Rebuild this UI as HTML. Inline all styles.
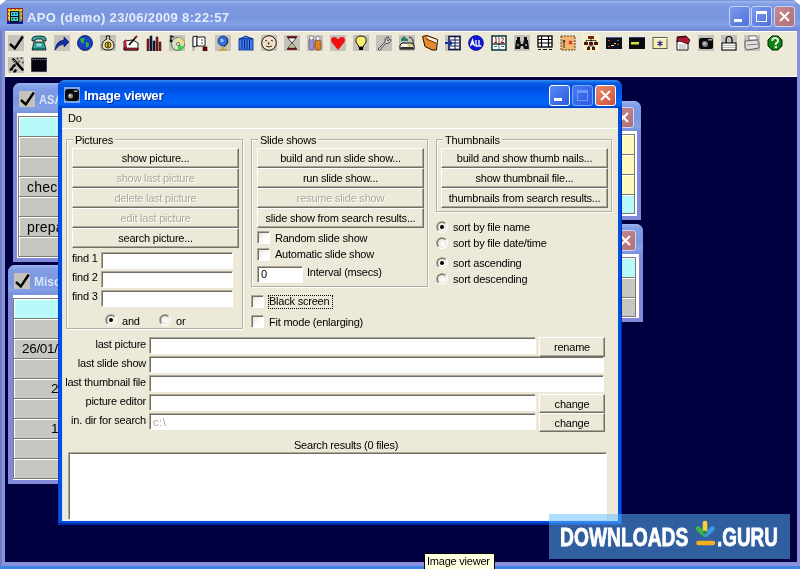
<!DOCTYPE html><html><head><meta charset="utf-8"><style>
*{box-sizing:border-box;margin:0;padding:0}
html,body{width:800px;height:569px;overflow:hidden;background:#000040;font-family:"Liberation Sans", sans-serif;}
body{will-change:transform}
.abs{position:absolute}
.t{position:absolute;white-space:nowrap;font-size:11px;line-height:13px;color:#000;letter-spacing:-0.22px}
.btn{position:absolute;background:#ECE9D8;border-top:1px solid #fff;border-left:1px solid #fff;border-right:1px solid #716F64;border-bottom:1px solid #716F64;box-shadow:inset -1px -1px 0 #ACA899;font-size:11px;letter-spacing:-0.22px;text-align:center;white-space:nowrap;color:#000}
.btn.dis{color:#ACA899;text-shadow:1px 1px 0 #fff}
.edit{position:absolute;background:#fff;border-top:1px solid #ACA899;border-left:1px solid #ACA899;border-right:1px solid #fff;border-bottom:1px solid #fff;box-shadow:inset 1px 1px 0 #716F64}
.grp{position:absolute;border:1px solid #B4B0A2;box-shadow:inset 1px 1px 0 #fff, 1px 1px 0 #fff}
.cb{position:absolute;width:13px;height:13px;border-top:1px solid #ACA899;border-left:1px solid #ACA899;border-right:1px solid #fff;border-bottom:1px solid #fff;background:linear-gradient(135deg,#E6E4DA,#fff 70%);box-shadow:inset 1px 1px 0 #716F64}
.rb{position:absolute;width:12px;height:12px;border-radius:50%;background:linear-gradient(135deg,#ACA899 0,#ACA899 50%,#fff 50%);}
.rb::after{content:"";position:absolute;left:1px;top:1px;width:10px;height:10px;border-radius:50%;background:linear-gradient(135deg,#716F64 0,#716F64 45%,#ECE9D8 55%);}
.rbi{position:absolute;left:2px;top:2px;width:8px;height:8px;border-radius:50%;background:radial-gradient(circle at 60% 60%,#fff,#E0DED4);z-index:2}
.dot{position:absolute;left:2px;top:2px;width:4px;height:4px;border-radius:50%;background:#000}
</style></head><body>

<div class="abs" style="left:0;top:0;width:800px;height:569px;background:#8890DC"></div>
<div class="abs" style="left:0;top:0;width:2px;height:569px;background:#6E7EC0"></div>
<div class="abs" style="left:0;top:566px;width:800px;height:3px;background:#3A84E4"></div>
<div class="abs" style="left:0;top:0;width:800px;height:31px;border-radius:7px 7px 0 0;background:linear-gradient(#7484CC 0,#98B4EC 1.5px,#8AA6E8 3px,#7C98E0 6px,#7A96DE 18px,#82A0E6 24px,#7890DA 28px,#7088D4 31px)"></div>
<div class="abs" style="left:0;top:0;width:6px;height:5px;background:#fff;clip-path:polygon(0 0,100% 0,0 100%)"></div>
<div class="abs" style="left:794px;top:0;width:6px;height:5px;background:#fff;clip-path:polygon(0 0,100% 0,100% 100%)"></div>
<svg class="abs" style="left:7px;top:8px" width="16" height="16" viewBox="0 0 16 16">
<rect width="16" height="16" fill="#902818"/><rect x="1" y="1" width="14" height="13" fill="#F8D040"/>
<path d="M1 3L2 4L1 5M1 7L2 8L1 9M1 11L2 12L1 13M3 1L4 2L5 1M7 1L8 2L9 1M11 1L12 2L13 1M15 3L14 4L15 5M15 7L14 8L15 9M15 11L14 12L15 13" stroke="#C04010" stroke-width="0.8" fill="none"/>
<rect x="0" y="13" width="16" height="3" fill="#1020A0"/>
<rect x="3" y="3" width="9" height="12" fill="#101020"/><rect x="4" y="4" width="7" height="4" fill="#40D0D8"/><rect x="4" y="9" width="7" height="4" fill="#40D0D8"/>
<rect x="5" y="5" width="1.5" height="1.5" fill="#103040"/><rect x="8" y="5" width="1.5" height="1.5" fill="#103040"/><rect x="5" y="10" width="1.5" height="1.5" fill="#103040"/><rect x="8" y="10" width="1.5" height="1.5" fill="#103040"/>
<rect x="12" y="3" width="1.5" height="11" fill="#208878"/></svg>
<div class="t" style="left:27px;top:9px;font-size:13px;line-height:17px;font-weight:bold;color:#E4ECFA;letter-spacing:0.35px">APO (demo) 23/06/2009 8:22:57</div>
<div class="abs" style="left:729px;top:6px;width:21px;height:21px;border-radius:3px;border:1px solid #C8D4F8;background:linear-gradient(135deg,#7A9AF0,#5070D8)"><div class="abs" style="left:4px;top:12px;width:8px;height:3px;background:#fff"></div></div>
<div class="abs" style="left:751px;top:6px;width:21px;height:21px;border-radius:3px;border:1px solid #C8D4F8;background:linear-gradient(135deg,#7A9AF0,#5070D8)"><div class="abs" style="left:4px;top:4px;width:11px;height:11px;border:1px solid #fff;border-top-width:3px"></div></div>
<div class="abs" style="left:774px;top:6px;width:21px;height:21px;border-radius:3px;border:1px solid #C8D4F8;background:linear-gradient(135deg,#C88890,#B07078)"><svg class="abs" style="left:3px;top:3px" width="13" height="13" viewBox="0 0 13 13"><path d="M2 2L11 11M11 2L2 11" stroke="#fff" stroke-width="2"/></svg></div>
<div class="abs" style="left:5px;top:31px;width:792px;height:46px;background:#ECE9D8;border-top:1px solid #FFFFFF;border-bottom:1px solid #FFFFFF"></div>
<div class="abs" style="left:5px;top:77px;width:792px;height:485px;background:#000040"></div>
<svg class="abs" style="left:8px;top:35px" width="16" height="16" viewBox="0 0 16 16"><rect width="16" height="16" fill="#C4C2BA"/><path d="M2 9L6.8 13.5L14.8 1.5" stroke="#000" stroke-width="2.4" fill="none"/></svg>
<svg class="abs" style="left:31px;top:35px" width="16" height="16" viewBox="0 0 16 16"><path d="M1 4Q1 1 8 1Q15 1 15 4L15 6L12 6L11 4L5 4L4 6L1 6Z" fill="#30B0A8" stroke="#000" stroke-width="0.8"/><path d="M3 7L13 7L15 15L1 15Z" fill="#30B0A8" stroke="#000" stroke-width="0.8"/><rect x="5" y="8" width="6" height="4" fill="#90E0D8" stroke="#206060" stroke-width="0.6"/><rect x="2" y="13" width="12" height="2" fill="#107070"/></svg>
<svg class="abs" style="left:54px;top:35px" width="16" height="16" viewBox="0 0 16 16"><rect width="16" height="16" fill="#C4C2BA"/><path d="M1 15Q2 6 10 5L10 2L15 7L10 12L10 9Q5 9 1 15Z" fill="#1030A0" stroke="#000060" stroke-width="0.6"/></svg>
<svg class="abs" style="left:77px;top:35px" width="16" height="16" viewBox="0 0 16 16"><circle cx="8" cy="8" r="7.5" fill="#1840C0" stroke="#001060" stroke-width="0.8"/><path d="M3 4Q6 2 8 4Q6 6 7 8Q5 9 4 7Z M9 7Q12 7 12 10Q11 13 9 12Z" fill="#30B040"/></svg>
<svg class="abs" style="left:100px;top:35px" width="16" height="16" viewBox="0 0 16 16"><rect width="16" height="16" fill="#C4C2BA"/><path d="M6 1L10 1L9 4Q14 6 14 11Q14 15 8 15Q2 15 2 11Q2 6 7 4Z" fill="#E8E0B0" stroke="#000" stroke-width="0.9"/><circle cx="8" cy="10" r="3" fill="#E0C020" stroke="#000" stroke-width="0.7"/><path d="M9 8.5Q7 8 7 9.5Q9 10 9 11Q8 12 7 11.5" stroke="#000" stroke-width="0.7" fill="none"/></svg>
<svg class="abs" style="left:123px;top:35px" width="16" height="16" viewBox="0 0 16 16"><path d="M1 6L10 5L15 8L15 15L1 15Z" fill="#fff" stroke="#000" stroke-width="0.9"/><path d="M1 6L3 4L4 13L1 14Z" fill="#C02040"/><path d="M1 13L15 13L15 15L1 15Z" fill="#C02040" stroke="#000" stroke-width="0.6"/><path d="M6 10L14 1" stroke="#000" stroke-width="1.6"/><path d="M11 3L14 1" stroke="#C02040" stroke-width="1.5"/></svg>
<svg class="abs" style="left:146px;top:35px" width="16" height="16" viewBox="0 0 16 16"><rect x="1" y="4" width="2" height="12" fill="#A02020" stroke="#000" stroke-width="0.5"/><rect x="4" y="1" width="2" height="15" fill="#102050" stroke="#000" stroke-width="0.5"/><rect x="7" y="6" width="2" height="10" fill="#102050" stroke="#000" stroke-width="0.5"/><rect x="10" y="2" width="2" height="14" fill="#A02020" stroke="#000" stroke-width="0.5"/><rect x="13" y="7" width="2" height="9" fill="#A02020" stroke="#000" stroke-width="0.5"/></svg>
<svg class="abs" style="left:169px;top:35px" width="16" height="16" viewBox="0 0 16 16"><rect width="16" height="16" fill="#C4C2BA"/><circle cx="9" cy="9" r="6.5" fill="#D8E0C8" stroke="#404040" stroke-width="0.7"/><path d="M9 9L9 2.5A6.5 6.5 0 0 1 15.5 9Z" fill="#E8E080"/><path d="M9 9L15 12A6.5 6.5 0 0 1 9 15.5Z" fill="#40D040"/><circle cx="9" cy="9" r="1.5" fill="#fff" stroke="#000" stroke-width="0.5"/><path d="M2 6L2 1L5 2" stroke="#000" stroke-width="1.2" fill="none"/><circle cx="2" cy="6" r="1.3" fill="#000"/></svg>
<svg class="abs" style="left:192px;top:35px" width="16" height="16" viewBox="0 0 16 16"><rect x="0" y="0" width="3" height="16" fill="#C4C2BA"/><path d="M1 2L5 1L5 11L1 12Z" fill="#fff" stroke="#000" stroke-width="0.9"/><path d="M5 2L13 2L13 11L5 11Z" fill="#fff" stroke="#000" stroke-width="0.9"/><rect x="9" y="4" width="2" height="2" fill="#A0A0A0"/><rect x="9" y="7" width="2" height="2" fill="#A0A0A0"/><rect x="11" y="12" width="4" height="4" fill="#800000" stroke="#000" stroke-width="0.6"/></svg>
<svg class="abs" style="left:215px;top:35px" width="16" height="16" viewBox="0 0 16 16"><rect width="16" height="16" fill="#C4C2BA"/><circle cx="8" cy="6" r="5" fill="#3070E0" stroke="#102060" stroke-width="0.7"/><path d="M5 4Q8 3 9 6Q7 8 6 7Z" fill="#A0C0F0"/><path d="M12 3Q14 8 9 12" stroke="#403010" stroke-width="1" fill="none"/><path d="M8 12L8 14M4 15L12 15" stroke="#C0A020" stroke-width="1.6"/></svg>
<svg class="abs" style="left:238px;top:35px" width="16" height="16" viewBox="0 0 16 16"><path d="M1 4L8 1L15 4Z" fill="#4080F0" stroke="#002080" stroke-width="0.8"/><rect x="1" y="4" width="14" height="11" fill="#4080F0" stroke="#002080" stroke-width="0.8"/><path d="M4 5L4 14M6.5 5L6.5 14M9 5L9 14M11.5 5L11.5 14" stroke="#002080" stroke-width="1"/></svg>
<svg class="abs" style="left:261px;top:35px" width="16" height="16" viewBox="0 0 16 16"><rect width="16" height="16" fill="#C4C2BA"/><circle cx="8" cy="8" r="7.3" fill="#F4E0C8" stroke="#000" stroke-width="0.9"/><path d="M4 6L6 5.5M10 5.5L12 6M8 7L7 9L8.5 9M5 11Q8 13 11 11" stroke="#000" stroke-width="0.8" fill="none"/></svg>
<svg class="abs" style="left:284px;top:35px" width="16" height="16" viewBox="0 0 16 16"><rect width="16" height="16" fill="#C4C2BA"/><rect x="3" y="1" width="10" height="2" fill="#802020"/><rect x="3" y="13" width="10" height="2" fill="#802020"/><path d="M4 3L12 3L8 8L12 13L4 13L8 8Z" fill="#fff" stroke="#000" stroke-width="0.7"/><path d="M5 12L11 12L8 9Z" fill="#C0C080"/></svg>
<svg class="abs" style="left:307px;top:35px" width="16" height="16" viewBox="0 0 16 16"><rect width="16" height="16" fill="#C4C2BA"/><rect x="2" y="4" width="5" height="11" rx="2" fill="#A090D0" stroke="#404060" stroke-width="0.6"/><circle cx="4.5" cy="3" r="2" fill="#fff" stroke="#404060" stroke-width="0.5"/><rect x="8" y="5" width="6" height="10" rx="2" fill="#E08020" stroke="#603000" stroke-width="0.6"/><circle cx="11" cy="3.5" r="2" fill="#fff" stroke="#404060" stroke-width="0.5"/></svg>
<svg class="abs" style="left:330px;top:35px" width="16" height="16" viewBox="0 0 16 16"><rect width="16" height="16" fill="#C4C2BA"/><path d="M8 15L1.5 7Q0 3 3.5 2Q6.5 1.5 8 4.5Q9.5 1.5 12.5 2Q16 3 14.5 7Z" fill="#F01010"/></svg>
<svg class="abs" style="left:353px;top:35px" width="16" height="16" viewBox="0 0 16 16"><rect width="16" height="16" fill="#C4C2BA"/><path d="M8 1Q14 1 13 7Q12 9 10.5 10.5L10.5 12L5.5 12L5.5 10.5Q4 9 3 7Q2 1 8 1Z" fill="#F8F070" stroke="#000" stroke-width="0.9"/><rect x="6" y="12" width="4" height="3" fill="#000"/></svg>
<svg class="abs" style="left:376px;top:35px" width="16" height="16" viewBox="0 0 16 16"><rect width="16" height="16" fill="#C4C2BA"/><path d="M2 14L9 7Q8 3 11 2L13 2L11 4.5L12 6L14 4L15 5Q14 9 9.5 8.5L3.5 15.5Z" fill="#D0D0D0" stroke="#404040" stroke-width="0.9"/></svg>
<svg class="abs" style="left:399px;top:35px" width="16" height="16" viewBox="0 0 16 16"><rect width="16" height="16" fill="#C4C2BA"/><path d="M1 10L3 8L12 8L15 10L15 14L1 14Z" fill="#F0EEE0" stroke="#000" stroke-width="1"/><rect x="2" y="12" width="12" height="2" fill="#303030"/><rect x="3" y="9.5" width="4" height="2" fill="#fff"/><rect x="9" y="9.5" width="4" height="2" fill="#E0C050"/><path d="M5 1L8 4L2 4Z" fill="#208060"/><rect x="2" y="4" width="7" height="2" fill="#208060"/><path d="M10 2Q15 3 14 9" stroke="#000" stroke-width="0.9" fill="none"/></svg>
<svg class="abs" style="left:422px;top:35px" width="16" height="16" viewBox="0 0 16 16"><path d="M0.5 1.5L5 0.5L15.5 4.5L14.5 15L10 15L3 11.5Z" fill="#E88830" stroke="#201000" stroke-width="1"/><path d="M5 1.5L15 5L14.5 8L6 4Z" fill="#F8F0E0"/><path d="M4 4L14 8" stroke="#402000" stroke-width="0.8"/></svg>
<svg class="abs" style="left:445px;top:35px" width="16" height="16" viewBox="0 0 16 16"><rect width="16" height="16" fill="#C4C2BA"/><rect x="4" y="1.5" width="11" height="13" fill="#fff" stroke="#101840" stroke-width="1.6"/><path d="M5 5L14 5M5 8L14 8M5 11L14 11M10 2L10 14" stroke="#101840" stroke-width="1"/><path d="M0 7L5 7L5 5L8 8L5 11L5 9L0 9Z" fill="#1030B0"/></svg>
<svg class="abs" style="left:468px;top:35px" width="16" height="16" viewBox="0 0 16 16"><circle cx="8" cy="8" r="7.5" fill="#1018D8" stroke="#000070" stroke-width="0.6"/><path d="M2.5 11L4.5 5L6.5 11M3.3 9L5.7 9M8 5L8 11L10 11M11 5L11 11L13.3 11" stroke="#fff" stroke-width="1.3" fill="none"/></svg>
<svg class="abs" style="left:491px;top:35px" width="16" height="16" viewBox="0 0 16 16"><rect x="1" y="1" width="14" height="14" fill="#fff" stroke="#104040" stroke-width="1.6"/><path d="M8 2L8 14" stroke="#104040" stroke-width="0.8"/><path d="M4 3L5 2.5L5 7.5M3.5 7.5L6 7.5M10 3.5Q12 2 12.5 4Q12 5.5 10 7.5L13 7.5" stroke="#B01010" stroke-width="1" fill="none"/><path d="M2 9L14 9" stroke="#000" stroke-width="1.2"/><path d="M3 11.5L6 11.5M10 11.5L13 11.5" stroke="#208080" stroke-width="1"/></svg>
<svg class="abs" style="left:514px;top:35px" width="16" height="16" viewBox="0 0 16 16"><rect width="16" height="16" fill="#C4C2BA"/><path d="M2 5L6 5L7 9L9 9L10 5L14 5L15 14L10 14L9 11L7 11L6 14L1 14Z" fill="#101010"/><rect x="3" y="2" width="3" height="3" fill="#101010"/><rect x="10" y="2" width="3" height="3" fill="#101010"/><rect x="3" y="9" width="2" height="2" fill="#808080"/><rect x="11" y="9" width="2" height="2" fill="#808080"/></svg>
<svg class="abs" style="left:537px;top:35px" width="16" height="16" viewBox="0 0 16 16"><rect x="1" y="1" width="14" height="11" fill="#fff" stroke="#000" stroke-width="1.3"/><path d="M1 4.5L15 4.5M1 8L15 8M4.5 1L4.5 12M11.5 1L11.5 12" stroke="#000" stroke-width="1.2"/><path d="M1 14.5L4 14.5M6 14.5L10 14.5M12 14.5L15 14.5" stroke="#000" stroke-width="1.2"/></svg>
<svg class="abs" style="left:560px;top:35px" width="16" height="16" viewBox="0 0 16 16"><rect x="1" y="1" width="14" height="14" fill="#F0B870" stroke="#604020" stroke-width="1" stroke-dasharray="2 1"/><path d="M4 13L4 5M3 7L4 5L5 7" stroke="#402010" stroke-width="1" fill="none"/><path d="M9 6L12 9M12 6L9 9" stroke="#E02020" stroke-width="1.3"/></svg>
<svg class="abs" style="left:583px;top:35px" width="16" height="16" viewBox="0 0 16 16"><rect width="16" height="16" fill="#F8F4C8"/><rect x="5" y="1" width="6" height="3" fill="#802020"/><rect x="1" y="7" width="4" height="3" fill="#501010"/><rect x="6" y="7" width="4" height="3" fill="#501010"/><rect x="11" y="7" width="4" height="3" fill="#501010"/><rect x="4" y="12" width="3" height="3" fill="#501010"/><rect x="9" y="12" width="3" height="3" fill="#501010"/><path d="M8 4L8 7M3 7L3 5.5L13 5.5L13 7M8 10L8 11L5.5 11L5.5 12M8 11L10.5 11L10.5 12" stroke="#000" stroke-width="0.7" fill="none"/></svg>
<svg class="abs" style="left:606px;top:35px" width="16" height="16" viewBox="0 0 16 16"><rect x="0" y="2" width="16" height="12" fill="#101018"/><rect x="0" y="2" width="16" height="1" fill="#5060A0"/><rect x="2" y="5" width="2" height="1" fill="#C04040"/><rect x="8" y="8" width="2" height="1" fill="#E0E060"/><rect x="5" y="10" width="3" height="1" fill="#E0E0E0"/><rect x="11" y="5" width="2" height="1" fill="#4080C0"/><rect x="2" y="11" width="2" height="1" fill="#C04040"/><rect x="11" y="9" width="2" height="1" fill="#A04040"/></svg>
<svg class="abs" style="left:629px;top:35px" width="16" height="16" viewBox="0 0 16 16"><rect x="0" y="2" width="16" height="12" fill="#0A0A0A"/><rect x="0" y="2" width="16" height="1" fill="#304080"/><rect x="2" y="7" width="8" height="2.5" fill="#D8E040"/></svg>
<svg class="abs" style="left:652px;top:35px" width="16" height="16" viewBox="0 0 16 16"><rect x="1" y="2.5" width="14" height="11" fill="#F8F0B0" stroke="#606040" stroke-width="1"/><rect x="2" y="3" width="13" height="1" fill="#fff"/><path d="M8 5.5L8 11.5M5.5 7L10.5 10M10.5 7L5.5 10" stroke="#1818A0" stroke-width="1.1"/></svg>
<svg class="abs" style="left:675px;top:35px" width="16" height="16" viewBox="0 0 16 16"><path d="M2 5L10 4L13 7L13 15L2 15Z" fill="#fff" stroke="#000" stroke-width="0.9"/><path d="M2 2L11 1L15 5L13 9L5 6L2 7Z" fill="#B01830" stroke="#200" stroke-width="0.8"/><path d="M3 1.5L3 3M5 1.3L5 3M7 1.1L7 3M9 1L9 3" stroke="#000" stroke-width="0.7"/><path d="M4 10L11 10M4 12L11 12M4 14L11 14" stroke="#909090" stroke-width="0.8"/></svg>
<svg class="abs" style="left:698px;top:35px" width="16" height="16" viewBox="0 0 16 16"><rect width="16" height="16" fill="#C4C2BA"/><rect x="1" y="3" width="14" height="11" rx="2.5" fill="#0A0A0A"/><circle cx="7" cy="9" r="3" fill="#808080"/><circle cx="6.5" cy="8.5" r="1.3" fill="#D0D0D0"/><rect x="10" y="4" width="4" height="1.5" fill="#A0A0A0"/></svg>
<svg class="abs" style="left:721px;top:35px" width="16" height="16" viewBox="0 0 16 16"><rect width="16" height="16" fill="#C4C2BA"/><path d="M5 8L5 5Q5 1.5 8 1.5Q11 1.5 11 5L11 8" stroke="#000" stroke-width="1.2" fill="none"/><rect x="1" y="8" width="14" height="7" fill="#fff" stroke="#000" stroke-width="1"/><path d="M2.5 10.5L13.5 10.5M2.5 12.5L13.5 12.5" stroke="#404040" stroke-width="0.8" stroke-dasharray="1 1"/></svg>
<svg class="abs" style="left:744px;top:35px" width="16" height="16" viewBox="0 0 16 16"><rect width="16" height="16" fill="#C4C2BA"/><path d="M5 1L12 1L14 5L5 5Z" fill="#fff" stroke="#606060" stroke-width="0.8"/><path d="M1 6L13 5L15 8L15 13L3 15L1 12Z" fill="#E0E0E0" stroke="#505050" stroke-width="0.9"/><path d="M3 10L15 9" stroke="#808080" stroke-width="1"/></svg>
<svg class="abs" style="left:767px;top:35px" width="16" height="16" viewBox="0 0 16 16"><path d="M5 1L11 1L15 5L15 11L11 15L5 15L1 11L1 5Z" fill="#108010" stroke="#002800" stroke-width="1"/><path d="M5.2 6Q5.2 3 8 3Q11 3 11 5.8Q11 7.5 8.8 8.5L8.8 10" stroke="#E0F8E0" stroke-width="2" fill="none"/><rect x="7.6" y="11" width="2.4" height="2.2" fill="#E0F8E0"/></svg>
<svg class="abs" style="left:8px;top:57px" width="16" height="16" viewBox="0 0 16 16"><rect width="16" height="16" fill="#C4C2BA"/><path d="M5.5 2.5L14.5 12.5" stroke="#000" stroke-width="2.6" stroke-linecap="round"/><circle cx="6.3" cy="3.5" r="0.6" fill="#fff"/><circle cx="7.8" cy="5.1" r="0.6" fill="#fff"/><ellipse cx="6" cy="8.8" rx="2.2" ry="1.4" transform="rotate(-40 6 8.8)" fill="#000"/><ellipse cx="3.5" cy="12" rx="2.2" ry="1.4" transform="rotate(-40 3.5 12)" fill="#000"/><ellipse cx="7" cy="14" rx="2" ry="1.3" transform="rotate(-40 7 14)" fill="#000"/><circle cx="9.5" cy="1.5" r="0.9" fill="#404040"/><circle cx="13.5" cy="1" r="0.9" fill="#404040"/><circle cx="11" cy="4.5" r="0.9" fill="#404040"/><circle cx="15" cy="5.5" r="0.9" fill="#404040"/></svg>
<svg class="abs" style="left:31px;top:57px" width="16" height="16" viewBox="0 0 16 16"><rect x="0" y="0.5" width="16" height="14.5" fill="#05050F" stroke="#C0C0D8" stroke-width="0.6"/><path d="M1 2.5L15 2.5" stroke="#8080A0" stroke-width="1" stroke-dasharray="1.5 1"/></svg>
<div class="abs" style="left:13px;top:83px;width:120px;height:179px;background:#808AD8;border-radius:7px 7px 0 0;overflow:hidden"><div class="abs" style="left:0;top:0;width:120px;height:30px;background:linear-gradient(#A0B8F0 0,#8CA8EC 2px,#809CE4 5px,#7A96E0 18px,#84A0E6 25px,#7A94DC 29px)"></div></div>
<div class="abs" style="left:17px;top:113px;width:60px;height:145px;background:#fff"></div>
<div class="abs" style="left:18px;top:116px;width:60px;height:20px;background:#B8FAFA;border-top:1px solid #7C7C74;border-left:1px solid #7C7C74;box-shadow:inset 1px 1px 0 #fff"></div>
<div class="abs" style="left:18px;top:136px;width:60px;height:20px;background:#C8C6C0;border-top:1px solid #7C7C74;border-left:1px solid #7C7C74;box-shadow:inset 1px 1px 0 #fff"></div>
<div class="abs" style="left:18px;top:156px;width:60px;height:20px;background:#C8C6C0;border-top:1px solid #7C7C74;border-left:1px solid #7C7C74;box-shadow:inset 1px 1px 0 #fff"></div>
<div class="abs" style="left:18px;top:176px;width:60px;height:20px;background:#C8C6C0;border-top:1px solid #7C7C74;border-left:1px solid #7C7C74;box-shadow:inset 1px 1px 0 #fff"></div>
<div class="t" style="left:27px;top:179px;font-size:14px;line-height:16px;letter-spacing:0.2px">check</div>
<div class="abs" style="left:18px;top:196px;width:60px;height:20px;background:#C8C6C0;border-top:1px solid #7C7C74;border-left:1px solid #7C7C74;box-shadow:inset 1px 1px 0 #fff"></div>
<div class="abs" style="left:18px;top:216px;width:60px;height:20px;background:#C8C6C0;border-top:1px solid #7C7C74;border-left:1px solid #7C7C74;box-shadow:inset 1px 1px 0 #fff"></div>
<div class="t" style="left:27px;top:219px;font-size:14px;line-height:16px;letter-spacing:0.2px">prepare</div>
<div class="abs" style="left:18px;top:236px;width:60px;height:20px;background:#C8C6C0;border-top:1px solid #7C7C74;border-left:1px solid #7C7C74;box-shadow:inset 1px 1px 0 #fff"></div>
<div class="abs" style="left:18px;top:256px;width:60px;height:1px;background:#7C7C74"></div>
<svg class="abs" style="left:19px;top:91px" width="16" height="16" viewBox="0 0 16 16"><rect width="16" height="16" fill="#C4C2BA"/><path d="M2 9L6.8 13.5L14.8 1.5" stroke="#000" stroke-width="2.4" fill="none"/></svg>
<div class="t" style="left:39px;top:92px;font-size:13px;line-height:16px;font-weight:bold;color:#D8E4F8;letter-spacing:0;transform:scaleX(0.86);transform-origin:0 0">ASAP</div>
<div class="abs" style="left:8px;top:265px;width:120px;height:219px;background:#808AD8;border-radius:7px 7px 0 0;overflow:hidden"><div class="abs" style="left:0;top:0;width:120px;height:30px;background:linear-gradient(#A0B8F0 0,#8CA8EC 2px,#809CE4 5px,#7A96E0 18px,#84A0E6 25px,#7A94DC 29px)"></div></div>
<div class="abs" style="left:13px;top:295px;width:60px;height:185px;background:#fff"></div>
<div class="abs" style="left:13px;top:298px;width:60px;height:20px;background:#B8FAFA;border-top:1px solid #7C7C74;border-left:1px solid #7C7C74;box-shadow:inset 1px 1px 0 #fff"></div>
<div class="abs" style="left:13px;top:318px;width:60px;height:20px;background:#C8C6C0;border-top:1px solid #7C7C74;border-left:1px solid #7C7C74;box-shadow:inset 1px 1px 0 #fff"></div>
<div class="abs" style="left:13px;top:338px;width:60px;height:20px;background:#C8C6C0;border-top:1px solid #7C7C74;border-left:1px solid #7C7C74;box-shadow:inset 1px 1px 0 #fff"></div>
<div class="t" style="left:22px;top:341px;font-size:13.5px;line-height:16px;letter-spacing:-0.3px">26/01/2009</div>
<div class="abs" style="left:13px;top:358px;width:60px;height:20px;background:#C8C6C0;border-top:1px solid #7C7C74;border-left:1px solid #7C7C74;box-shadow:inset 1px 1px 0 #fff"></div>
<div class="abs" style="left:13px;top:378px;width:60px;height:20px;background:#C8C6C0;border-top:1px solid #7C7C74;border-left:1px solid #7C7C74;box-shadow:inset 1px 1px 0 #fff"></div>
<div class="t" style="left:13px;top:381px;width:45.5px;text-align:right;font-size:13.5px;line-height:16px;letter-spacing:0">2</div>
<div class="abs" style="left:13px;top:398px;width:60px;height:20px;background:#C8C6C0;border-top:1px solid #7C7C74;border-left:1px solid #7C7C74;box-shadow:inset 1px 1px 0 #fff"></div>
<div class="abs" style="left:13px;top:418px;width:60px;height:20px;background:#C8C6C0;border-top:1px solid #7C7C74;border-left:1px solid #7C7C74;box-shadow:inset 1px 1px 0 #fff"></div>
<div class="t" style="left:13px;top:421px;width:45.5px;text-align:right;font-size:13.5px;line-height:16px;letter-spacing:0">1</div>
<div class="abs" style="left:13px;top:438px;width:60px;height:20px;background:#C8C6C0;border-top:1px solid #7C7C74;border-left:1px solid #7C7C74;box-shadow:inset 1px 1px 0 #fff"></div>
<div class="abs" style="left:13px;top:458px;width:60px;height:20px;background:#C8C6C0;border-top:1px solid #7C7C74;border-left:1px solid #7C7C74;box-shadow:inset 1px 1px 0 #fff"></div>
<div class="abs" style="left:13px;top:478px;width:60px;height:1px;background:#7C7C74"></div>
<svg class="abs" style="left:14px;top:273px" width="16" height="16" viewBox="0 0 16 16"><rect width="16" height="16" fill="#C4C2BA"/><path d="M2 9L6.8 13.5L14.8 1.5" stroke="#000" stroke-width="2.4" fill="none"/></svg>
<div class="t" style="left:34px;top:274px;font-size:13px;line-height:16px;font-weight:bold;color:#D8E4F8;letter-spacing:0;transform:scaleX(0.92);transform-origin:0 0">Misc</div>
<div class="abs" style="left:560px;top:101px;width:81px;height:119px;background:#808AD8;border-radius:7px 7px 0 0;overflow:hidden"><div class="abs" style="left:0;top:0;width:81px;height:30px;background:linear-gradient(#A0B8F0 0,#8CA8EC 2px,#809CE4 5px,#7A96E0 18px,#84A0E6 25px,#7A94DC 29px)"></div></div>
<div class="abs" style="left:600px;top:131px;width:37px;height:85px;background:#fff"></div>
<div class="abs" style="left:600px;top:134px;width:35px;height:20px;background:#FCF8C0;border-top:1px solid #7C7C74;border-left:1px solid #7C7C74;box-shadow:inset 1px 1px 0 #fff"></div>
<div class="abs" style="left:600px;top:154px;width:35px;height:20px;background:#FCF8C0;border-top:1px solid #7C7C74;border-left:1px solid #7C7C74;box-shadow:inset 1px 1px 0 #fff"></div>
<div class="abs" style="left:600px;top:174px;width:35px;height:20px;background:#FCF8C0;border-top:1px solid #7C7C74;border-left:1px solid #7C7C74;box-shadow:inset 1px 1px 0 #fff"></div>
<div class="abs" style="left:600px;top:194px;width:35px;height:20px;background:#B8FAFA;border-top:1px solid #7C7C74;border-left:1px solid #7C7C74;box-shadow:inset 1px 1px 0 #fff"></div>
<div class="abs" style="left:600px;top:134px;width:35px;height:80px;border-right:1px solid #7C7C74;border-bottom:1px solid #7C7C74"></div>
<div class="abs" style="left:613px;top:107px;width:21px;height:21px;border-radius:3px;border:1px solid #C8D4F8;background:linear-gradient(135deg,#C88890,#B07078)"><svg class="abs" style="left:3px;top:3px" width="13" height="13" viewBox="0 0 13 13"><path d="M2 2L11 11M11 2L2 11" stroke="#fff" stroke-width="2"/></svg></div>
<div class="abs" style="left:560px;top:224px;width:83px;height:98px;background:#808AD8;border-radius:7px 7px 0 0;overflow:hidden"><div class="abs" style="left:0;top:0;width:83px;height:30px;background:linear-gradient(#A0B8F0 0,#8CA8EC 2px,#809CE4 5px,#7A96E0 18px,#84A0E6 25px,#7A94DC 29px)"></div></div>
<div class="abs" style="left:600px;top:254px;width:39px;height:64px;background:#fff"></div>
<div class="abs" style="left:600px;top:257px;width:36px;height:20px;background:#B8FAFA;border-top:1px solid #7C7C74;border-left:1px solid #7C7C74;box-shadow:inset 1px 1px 0 #fff"></div>
<div class="abs" style="left:600px;top:277px;width:36px;height:20px;background:#C8C6C0;border-top:1px solid #7C7C74;border-left:1px solid #7C7C74;box-shadow:inset 1px 1px 0 #fff"></div>
<div class="abs" style="left:600px;top:297px;width:36px;height:20px;background:#C8C6C0;border-top:1px solid #7C7C74;border-left:1px solid #7C7C74;box-shadow:inset 1px 1px 0 #fff"></div>
<div class="abs" style="left:600px;top:257px;width:36px;height:60px;border-right:1px solid #7C7C74;border-bottom:1px solid #7C7C74"></div>
<div class="abs" style="left:615px;top:230px;width:21px;height:21px;border-radius:3px;border:1px solid #C8D4F8;background:linear-gradient(135deg,#C88890,#B07078)"><svg class="abs" style="left:3px;top:3px" width="13" height="13" viewBox="0 0 13 13"><path d="M2 2L11 11M11 2L2 11" stroke="#fff" stroke-width="2"/></svg></div>
<div class="abs" style="left:58px;top:80px;width:564px;height:445px;border-radius:7px 7px 0 0;background:#0050E6;overflow:hidden;box-shadow:inset 1px 0 0 #0840C8, inset -1px 0 0 #0030A0, inset 0 -2px 0 #0028A0"><div class="abs" style="left:0;top:0;width:564px;height:29px;background:linear-gradient(#3A8CF8 0,#2A80F0 1px,#0A5CE2 3px,#0050E0 8px,#0058F0 14px,#0064F8 21px,#0060F0 25px,#0048D0 27px,#0038A8 29px)"></div><div class="abs" style="left:4px;top:28px;width:556px;height:413px;background:#ECE9D8;border-top:1px solid #D8E8F8;border-left:1px solid #D0E0F8;border-bottom:1px solid #F0F4F8"></div></div>
<svg class="abs" style="left:64px;top:87px" width="16" height="16" viewBox="0 0 16 16"><rect width="16" height="16" fill="#7AA6F0"/>
<rect x="1" y="2" width="14" height="12" rx="3" fill="#0A0A0A"/><circle cx="6.5" cy="9" r="2.5" fill="#909090"/><circle cx="6" cy="8.5" r="1" fill="#E0E0E0"/><rect x="10" y="3.5" width="3.5" height="1.5" fill="#B0B0B0"/></svg>
<div class="t" style="left:84px;top:88px;font-size:13.2px;line-height:16px;font-weight:bold;color:#fff;letter-spacing:-0.3px;text-shadow:1px 1px 0 #0030A0">Image viewer</div>
<div class="abs" style="left:549px;top:85px;width:21px;height:21px;border-radius:3px;border:1px solid #fff;background:linear-gradient(135deg,#5A8AF8,#2A5AE0)"><div class="abs" style="left:4px;top:12px;width:8px;height:3px;background:#fff"></div></div>
<div class="abs" style="left:572px;top:85px;width:21px;height:21px;border-radius:3px;border:1px solid #7AA8F8;background:linear-gradient(135deg,#4A7AF0,#2A5AE0)"><div class="abs" style="left:4px;top:4px;width:11px;height:11px;border:1px solid #6A9AF8;border-top-width:3px"></div></div>
<div class="abs" style="left:595px;top:85px;width:21px;height:21px;border-radius:3px;border:1px solid #fff;background:linear-gradient(135deg,#E88A6A,#D0503A)"><svg class="abs" style="left:3px;top:3px" width="13" height="13" viewBox="0 0 13 13"><path d="M2 2L11 11M11 2L2 11" stroke="#fff" stroke-width="2"/></svg></div>
<div class="t" style="left:68px;top:112px;">Do</div>
<div class="abs" style="left:62px;top:128px;width:556px;height:1px;background:#fff"></div>
<div class="grp" style="left:66px;top:139px;width:177px;height:190px"></div>
<div class="t" style="left:73px;top:134px;padding:0 2px;background:#ECE9D8">Pictures</div>
<div class="btn" style="left:72px;top:148px;width:167px;height:20px;line-height:18px">show picture...</div>
<div class="btn dis" style="left:72px;top:168px;width:167px;height:20px;line-height:18px">show last picture</div>
<div class="btn dis" style="left:72px;top:188px;width:167px;height:20px;line-height:18px">delete last picture</div>
<div class="btn dis" style="left:72px;top:208px;width:167px;height:20px;line-height:18px">edit last picture</div>
<div class="btn" style="left:72px;top:228px;width:167px;height:20px;line-height:18px">search picture...</div>
<div class="t" style="left:72px;top:252px;">find 1</div>
<div class="edit" style="left:101px;top:252px;width:132px;height:17px"></div>
<div class="t" style="left:72px;top:271px;">find 2</div>
<div class="edit" style="left:101px;top:271px;width:132px;height:17px"></div>
<div class="t" style="left:72px;top:290px;">find 3</div>
<div class="edit" style="left:101px;top:290px;width:132px;height:17px"></div>
<div class="rb" style="left:105px;top:314px"><div class="rbi"><div class=dot></div></div></div>
<div class="t" style="left:122px;top:315px;">and</div>
<div class="rb" style="left:159px;top:314px"><div class="rbi"></div></div>
<div class="t" style="left:176px;top:315px;">or</div>
<div class="grp" style="left:251px;top:139px;width:177px;height:148px"></div>
<div class="t" style="left:258px;top:134px;padding:0 2px;background:#ECE9D8">Slide shows</div>
<div class="btn" style="left:257px;top:148px;width:167px;height:20px;line-height:18px">build and run slide show...</div>
<div class="btn" style="left:257px;top:168px;width:167px;height:20px;line-height:18px">run slide show...</div>
<div class="btn dis" style="left:257px;top:188px;width:167px;height:20px;line-height:18px">resume slide show</div>
<div class="btn" style="left:257px;top:208px;width:167px;height:20px;line-height:18px">slide show from search results...</div>
<div class="cb" style="left:257px;top:231px"></div>
<div class="t" style="left:275px;top:232px;">Random slide show</div>
<div class="cb" style="left:257px;top:248px"></div>
<div class="t" style="left:275px;top:248px;">Automatic slide show</div>
<div class="edit" style="left:257px;top:266px;width:46px;height:17px"></div>
<div class="t" style="left:261px;top:268px;">0</div>
<div class="t" style="left:307px;top:266px;">Interval (msecs)</div>
<div class="cb" style="left:251px;top:295px"></div>
<div class="t" style="left:269px;top:295px;">Black screen</div>
<div class="abs" style="left:268px;top:295px;width:65px;height:14px;border:1px dotted #000"></div>
<div class="cb" style="left:251px;top:315px"></div>
<div class="t" style="left:269px;top:316px;">Fit mode (enlarging)</div>
<div class="grp" style="left:436px;top:139px;width:176px;height:73px"></div>
<div class="t" style="left:443px;top:134px;padding:0 2px;background:#ECE9D8">Thumbnails</div>
<div class="btn" style="left:441px;top:148px;width:167px;height:20px;line-height:18px">build and show thumb nails...</div>
<div class="btn" style="left:441px;top:168px;width:167px;height:20px;line-height:18px">show thumbnail file...</div>
<div class="btn" style="left:441px;top:188px;width:167px;height:20px;line-height:18px">thumbnails from search results...</div>
<div class="rb" style="left:436px;top:221px"><div class="rbi"><div class=dot></div></div></div>
<div class="t" style="left:453px;top:221px;">sort by file name</div>
<div class="rb" style="left:436px;top:237px"><div class="rbi"></div></div>
<div class="t" style="left:453px;top:237px;">sort by file date/time</div>
<div class="rb" style="left:436px;top:257px"><div class="rbi"><div class=dot></div></div></div>
<div class="t" style="left:453px;top:257px;">sort ascending</div>
<div class="rb" style="left:436px;top:273px"><div class="rbi"></div></div>
<div class="t" style="left:453px;top:273px;">sort descending</div>
<div class="t" style="left:40px;top:338px;width:106px;text-align:right">last picture</div>
<div class="t" style="left:40px;top:357px;width:106px;text-align:right">last slide show</div>
<div class="t" style="left:40px;top:376px;width:106px;text-align:right">last thumbnail file</div>
<div class="t" style="left:40px;top:395px;width:106px;text-align:right">picture editor</div>
<div class="t" style="left:40px;top:414px;width:106px;text-align:right">in. dir for search</div>
<div class="edit" style="left:149px;top:337px;width:387px;height:17px"></div>
<div class="edit" style="left:149px;top:356px;width:455px;height:17px"></div>
<div class="edit" style="left:149px;top:375px;width:455px;height:17px"></div>
<div class="edit" style="left:149px;top:394px;width:387px;height:17px"></div>
<div class="edit" style="left:149px;top:413px;width:387px;height:17px"></div>
<div class="t" style="left:153px;top:416px;color:#A8A498;letter-spacing:0.6px">c:\</div>
<div class="btn" style="left:539px;top:337px;width:66px;height:20px;line-height:18px">rename</div>
<div class="btn" style="left:539px;top:394px;width:66px;height:19px;line-height:19px">change</div>
<div class="btn" style="left:539px;top:413px;width:66px;height:19px;line-height:19px">change</div>
<div class="t" style="left:294px;top:439px;">Search results (0 files)</div>
<div class="edit" style="left:68px;top:452px;width:539px;height:68px"></div>
<div class="abs" style="left:424px;top:553px;width:71px;height:18px;background:#FFFFE1;border:1px solid #000"></div>
<div class="t" style="left:427px;top:555px;">Image viewer</div>
<div class="abs" style="left:549px;top:514px;width:241px;height:45px;background:rgba(95,190,255,0.5)"></div>
<div class="abs" style="left:560px;top:522px;font-family:'Liberation Sans';font-weight:bold;font-size:25px;line-height:30px;color:#fff;-webkit-text-stroke:0.8px #fff;white-space:nowrap;transform:scaleX(0.77);transform-origin:0 0">DOWNLOADS</div>
<svg class="abs" style="left:694px;top:518px" width="22" height="30" viewBox="0 0 22 30">
<path d="M11 5L11 15" stroke="#F4D030" stroke-width="4.6" stroke-linecap="round"/>
<path d="M4 10.5L10.5 16.5" stroke="#40B048" stroke-width="4.6" stroke-linecap="round"/>
<path d="M18.5 10.5L12 16.5" stroke="#3A9CE0" stroke-width="4.6" stroke-linecap="round"/>
<path d="M9.5 13.5L11 15L12.5 13.5" stroke="#308850" stroke-width="3" fill="none"/>
<path d="M4.5 25L19 25" stroke="#F4B020" stroke-width="4.6" stroke-linecap="round"/></svg>
<div class="abs" style="left:717px;top:522px;font-family:'Liberation Sans';font-weight:bold;font-size:25px;line-height:30px;color:#fff;-webkit-text-stroke:0.8px #fff;white-space:nowrap;transform:scaleX(0.755);transform-origin:0 0">.GURU</div>
</body></html>
